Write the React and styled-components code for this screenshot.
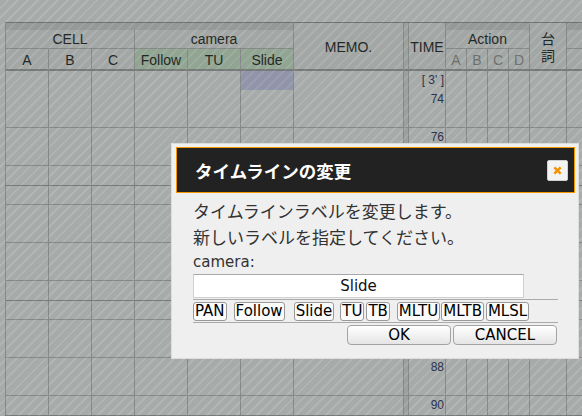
import React from 'react';
import styled, { createGlobalStyle } from 'styled-components';

const GlobalStyle = createGlobalStyle`
  html, body { margin: 0; padding: 0; background: #fff; overflow: hidden; }
  body { font-family: "DejaVu Sans", "Noto Sans CJK JP", sans-serif; }
  #root { width: 582px; height: 416px; overflow: hidden; position: relative; }
`;

const COLS = '43px 43px 43px 53px 53px 53px 110px 5px 37px 21px 21px 21px 21px 37px 43px';
const LINE = '#c4c4c4';
const THICK = '#acacac';

const Sheet = styled.div`
  padding: 22px 0 0 5px;
  width: 640px;
`;

const Header = styled.div`
  display: grid;
  grid-template-columns: ${COLS};
  grid-template-rows: 7px 19px 22px;
  border-top: 1px solid #a0a0a0;
  border-left: 1px solid ${LINE};
`;

const HeadCell = styled.div`
  grid-column: ${(p) => p.$col};
  grid-row: ${(p) => p.$row};
  box-sizing: border-box;
  display: flex;
  flex-direction: ${(p) => (p.$stack ? 'column' : 'row')};
  align-items: center;
  justify-content: center;
  padding-top: ${(p) => p.$lift ?? 1}px;
  background: ${(p) =>
    p.$tone === 'green' ? '#dcf4da' : p.$tone === 'band' ? '#e2e2e2' : p.$tone === 'gap' ? '#ececec' : '#f8f8f8'};
  border-right: 1px solid ${LINE};
  border-bottom: ${(p) =>
    p.$thick ? `2px solid ${THICK}` : p.$tone === 'band' ? 'none' : `1px solid ${LINE}`};
  font-family: "Liberation Sans", "Noto Sans CJK JP", sans-serif;
  font-size: 14px;
  line-height: 17px;
  color: ${(p) => (p.$muted ? '#9a9a9a' : '#1e1e1e')};
`;

const Row = styled.div`
  display: grid;
  grid-template-columns: ${COLS};
  box-sizing: border-box;
  height: ${(p) => (p.$thick ? 20 : 19)}px;
  border-bottom: ${(p) => (p.$thick ? `2px solid ${THICK}` : `1px solid ${LINE}`)};
  border-left: 1px solid ${LINE};
`;

const Cell = styled.div`
  box-sizing: border-box;
  border-right: 1px solid ${LINE};
  background: ${(p) => (p.$tone === 'selected' ? '#dadaff' : p.$tone === 'gap' ? '#ececec' : '#fff')};
  font-family: "Liberation Sans", sans-serif;
  font-size: 12px;
  line-height: 19px;
  text-align: right;
  padding-right: 1px;
  color: #2b3263;
  white-space: nowrap;
`;

const Shade = styled.div`
  position: absolute;
  inset: 0;
  z-index: 1;
  background: repeating-linear-gradient(
    135deg,
    rgba(40, 50, 45, 0.41) 0 5px,
    rgba(40, 50, 45, 0.36) 5px 7px
  );
`;

const Dialog = styled.div`
  position: absolute;
  left: 171px;
  top: 143px;
  z-index: 2;
  width: 408px;
  box-sizing: border-box;
  padding: 3px 3px 13px 4px;
  background: #efefef;
  border: 1px solid #dcdcdc;
`;

const TitleBar = styled.div`
  height: 46px;
  box-sizing: border-box;
  background: #222;
  border: 1px solid #f39800;
  display: flex;
  align-items: center;
  justify-content: space-between;
  padding: 0 6px 0 18px;
`;

const Title = styled.h2`
  margin: 0;
  font-family: "Noto Sans CJK JP", sans-serif;
  font-size: 17.5px;
  font-weight: bold;
  color: #fff;
`;

const CloseButton = styled.button`
  width: 21px;
  height: 21px;
  padding: 0;
  border: 1px solid #cfcfcf;
  border-radius: 2px;
  background: #f3f3f3;
  display: flex;
  align-items: center;
  justify-content: center;
`;

const Body = styled.div`
  padding: 6px 0 0 17px;
  color: #333;
`;

const Message = styled.p`
  margin: 0;
  font-size: 17px;
  line-height: 26px;
`;

const FieldLabel = styled.label`
  display: block;
  font-size: 15px;
  line-height: 23px;
`;

const TextInput = styled.input`
  display: block;
  width: 331px;
  height: 24px;
  box-sizing: border-box;
  margin: 0;
  border: 1px solid #d0d0d0;
  border-top-color: #a8a8a8;
  background: #fff;
  text-align: center;
  font: 15px "DejaVu Sans", sans-serif;
  color: #111;
`;

const ChoiceBar = styled.div`
  width: 365px;
  box-sizing: border-box;
  margin-top: 1px;
  padding: 2px 0 1px;
  border-top: 1px solid #aaa;
  border-bottom: 1px solid #aaa;
  display: flex;
`;

const Choice = styled.button`
  margin-left: ${(p) => p.$space}px;
  height: 19px;
  padding: 0 1px;
  border: 1px solid #999;
  border-radius: 3px;
  background: #fbfbfb;
  color: #000;
  font: 15px "DejaVu Sans", sans-serif;
  line-height: 17px;
`;

const Actions = styled.div`
  width: 364px;
  display: flex;
  justify-content: flex-end;
  gap: 2px;
  margin-top: 2px;
`;

const ActionButton = styled.button`
  width: 104px;
  height: 20px;
  padding: 0;
  border: 1px solid #a3a3a3;
  border-radius: 4px;
  background: linear-gradient(#ffffff, #e4e4e4);
  color: #000;
  font: 15px "DejaVu Sans", sans-serif;
  line-height: 18px;
`;

const CHOICES = [
  ['PAN', 0],
  ['Follow', 7],
  ['Slide', 9],
  ['TU', 6],
  ['TB', 2],
  ['MLTU', 7],
  ['MLTB', 1],
  ['MLSL', 2],
];

const ROWS = Array.from({ length: 19 }, (_, i) => i + 1);

function timeLabel(n) {
  if (n === 1) return "[ 3' ]";
  return n % 2 === 0 ? String(72 + n) : '';
}

function CloseIcon() {
  return (
    <svg width="9" height="9" viewBox="0 0 10 10">
      <path d="M1.5 1.5 L8.5 8.5 M8.5 1.5 L1.5 8.5" stroke="#f29300" strokeWidth="2.8" />
    </svg>
  );
}

export default function App() {
  return (
    <>
      <GlobalStyle />
      <Sheet>
        <Header>
          <HeadCell $col="1 / 7" $row="1" $tone="band" />
          <HeadCell $col="1 / 4" $row="2">CELL</HeadCell>
          <HeadCell $col="4 / 7" $row="2">camera</HeadCell>
          <HeadCell $col="1" $row="3" $thick $lift={2}>A</HeadCell>
          <HeadCell $col="2" $row="3" $thick $lift={2}>B</HeadCell>
          <HeadCell $col="3" $row="3" $thick $lift={2}>C</HeadCell>
          <HeadCell $col="4" $row="3" $thick $lift={2} $tone="green">Follow</HeadCell>
          <HeadCell $col="5" $row="3" $thick $lift={2} $tone="green">TU</HeadCell>
          <HeadCell $col="6" $row="3" $thick $lift={2} $tone="green">Slide</HeadCell>
          <HeadCell $col="7" $row="1 / 4" $thick $lift={3}>MEMO.</HeadCell>
          <HeadCell $col="8" $row="1 / 4" $thick $tone="gap" />
          <HeadCell $col="9" $row="1 / 4" $thick $lift={3}>TIME</HeadCell>
          <HeadCell $col="10 / 14" $row="1" $tone="band" />
          <HeadCell $col="10 / 14" $row="2">Action</HeadCell>
          <HeadCell $col="10" $row="3" $thick $lift={2} $muted>A</HeadCell>
          <HeadCell $col="11" $row="3" $thick $lift={2} $muted>B</HeadCell>
          <HeadCell $col="12" $row="3" $thick $lift={2} $muted>C</HeadCell>
          <HeadCell $col="13" $row="3" $thick $lift={2} $muted>D</HeadCell>
          <HeadCell $col="14" $row="1 / 4" $thick $stack $lift={4}>
            <span>台</span>
            <span>詞</span>
          </HeadCell>
          <HeadCell $col="15" $row="1" $tone="band" />
          <HeadCell $col="15" $row="2" />
          <HeadCell $col="15" $row="3" $thick />
        </Header>
        {ROWS.map((n) => (
          <Row key={n} $thick={n % 6 === 0}>
            <Cell />
            <Cell />
            <Cell />
            <Cell />
            <Cell />
            <Cell $tone={n === 1 ? 'selected' : undefined} />
            <Cell />
            <Cell $tone="gap" />
            <Cell>{timeLabel(n)}</Cell>
            <Cell />
            <Cell />
            <Cell />
            <Cell />
            <Cell />
            <Cell />
          </Row>
        ))}
      </Sheet>
      <Shade />
      <Dialog role="dialog">
        <TitleBar>
          <Title>タイムラインの変更</Title>
          <CloseButton aria-label="close">
            <CloseIcon />
          </CloseButton>
        </TitleBar>
        <Body>
          <Message>タイムラインラベルを変更します。</Message>
          <Message>新しいラベルを指定してください。</Message>
          <FieldLabel>camera:</FieldLabel>
          <TextInput defaultValue="Slide" />
          <ChoiceBar>
            {CHOICES.map(([label, space]) => (
              <Choice key={label} $space={space}>
                {label}
              </Choice>
            ))}
          </ChoiceBar>
          <Actions>
            <ActionButton>OK</ActionButton>
            <ActionButton>CANCEL</ActionButton>
          </Actions>
        </Body>
      </Dialog>
    </>
  );
}
